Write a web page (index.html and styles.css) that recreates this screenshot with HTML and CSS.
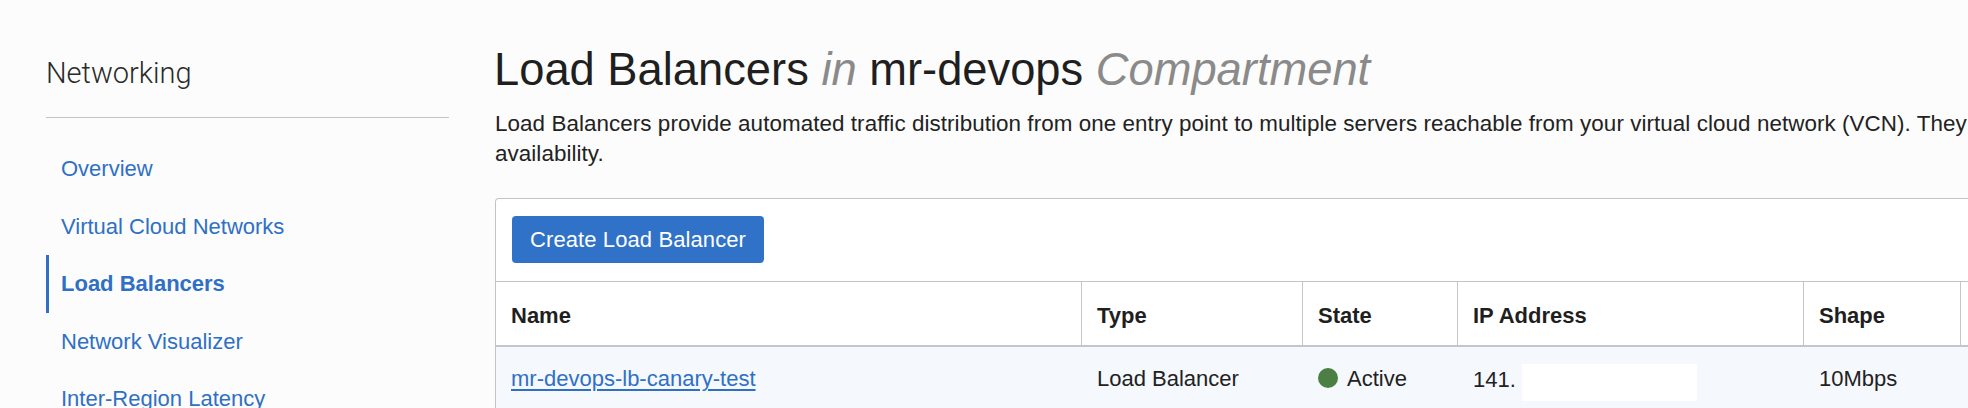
FILE: index.html
```html
<!DOCTYPE html>
<html lang="en">
<head>
<meta charset="utf-8">
<title>Load Balancers</title>
<link rel="stylesheet" href="styles.css">
</head>
<body>
<div class="page">
  <aside class="sidebar">
    <h2 class="side-title">Networking</h2>
    <ul class="nav">
      <li><a href="#">Overview</a></li>
      <li><a href="#">Virtual Cloud Networks</a></li>
      <li><a href="#" class="active">Load Balancers</a></li>
      <li><a href="#">Network Visualizer</a></li>
      <li><a href="#">Inter-Region Latency</a></li>
      <li><a href="#">Customer Connectivity</a></li>
    </ul>
  </aside>
  <main class="main">
    <h1 class="title">Load Balancers <em class="muted">in</em> mr-devops <em class="muted">Compartment</em></h1>
    <p class="desc">Load Balancers provide automated traffic distribution from one entry point to multiple servers reachable from your virtual cloud network (VCN). They improve resource utilization, facilitate scaling, and help ensure high<br>availability.</p>
    <section class="panel">
      <div class="toolbar">
        <button class="btn" type="button">Create Load Balancer</button>
      </div>
      <div class="grid">
        <div class="th">Name</div>
        <div class="th">Type</div>
        <div class="th">State</div>
        <div class="th">IP Address</div>
        <div class="th">Shape</div>
        <div class="th last">Created</div>

        <div class="td"><a href="#" class="link">mr-devops-lb-canary-test</a></div>
        <div class="td">Load Balancer</div>
        <div class="td"><span class="dot"></span>Active</div>
        <div class="td">141.<span class="redact"></span></div>
        <div class="td">10Mbps</div>
        <div class="td"></div>
      </div>
    </section>
  </main>
</div>
</body>
</html>
```
FILE: styles.css
```css
html, body {
  margin: 0;
  padding: 0;
  height: 408px;
  overflow: hidden;
  background: #fcfcfc;
}

body {
  font-family: "Liberation Sans", Arial, sans-serif;
  color: #222222;
}

.page {
  display: flex;
  width: 1968px;
  height: 408px;
  overflow: hidden;
}

.sidebar {
  flex: none;
  width: 403px;
  margin-left: 46px;
}

.side-title {
  margin: 0;
  padding: 55px 0 26px;
  font-family: Roboto, "Liberation Sans", sans-serif;
  font-weight: 300;
  font-size: 29px;
  line-height: 36px;
  color: #2a2a2a;
  border-bottom: 1px solid #c3c4cb;
}

.nav {
  list-style: none;
  margin: 22px 0 0;
  padding: 0;
}

.nav a {
  display: block;
  height: 57.5px;
  line-height: 58px;
  padding-left: 12px;
  border-left: 3px solid transparent;
  font-size: 22px;
  color: #2f70c5;
  text-decoration: none;
  white-space: nowrap;
}

.nav a.active {
  border-left-color: #2f70c5;
  font-weight: bold;
}

.main {
  flex: none;
  width: 3000px;
  margin-left: 46px;
  padding-top: 44px;
}

.title {
  margin: 0 0 0 -1px;
  font-size: 45.3px;
  line-height: 52px;
  font-weight: normal;
  color: #1f1f1f;
  white-space: nowrap;
}

.muted {
  color: #8a8a8a;
  font-style: italic;
}

.desc {
  margin: 13px 0 0;
  font-size: 22.4px;
  letter-spacing: 0.07px;
  line-height: 30px;
  color: #222222;
  white-space: nowrap;
}

.panel {
  margin-top: 29px;
  background: #ffffff;
  border: 1px solid #bfc3ca;
  border-right: none;
  border-radius: 4px 0 0 0;
}

.toolbar {
  padding: 17px 16px 18px;
  border-bottom: 1px solid #bfc3ca;
}

.btn {
  display: block;
  height: 47px;
  padding: 0 18px;
  border: none;
  border-radius: 4px;
  background: #2f72c7;
  color: #ffffff;
  font-family: "Liberation Sans", Arial, sans-serif;
  font-size: 22px;
  letter-spacing: 0.1px;
}

.grid {
  display: grid;
  grid-template-columns: 586px 221px 155px 346px 157px 1fr;
}

.th {
  box-sizing: border-box;
  height: 65px;
  padding: 2px 15px 0;
  line-height: 63px;
  font-size: 22px;
  font-weight: bold;
  color: #1f1f1f;
  border-right: 1px solid #c3c6cc;
  border-bottom: 2px solid #c3c6cc;
  white-space: nowrap;
}

.th.last {
  border-right: none;
}

.td {
  box-sizing: border-box;
  height: 80px;
  padding: 17px 15px 0;
  line-height: 30px;
  font-size: 22px;
  color: #222222;
  background: #f5f8fd;
  white-space: nowrap;
}

.link {
  color: #2f70c5;
  text-decoration: underline;
  text-underline-offset: 3px;
}

.dot {
  display: inline-block;
  width: 20px;
  height: 20px;
  margin-right: 9px;
  border-radius: 50%;
  background: #4b7f43;
  vertical-align: -2px;
}

.redact {
  display: inline-block;
  width: 175px;
  height: 37px;
  margin-left: 6px;
  background: #ffffff;
  vertical-align: -14px;
}
```
